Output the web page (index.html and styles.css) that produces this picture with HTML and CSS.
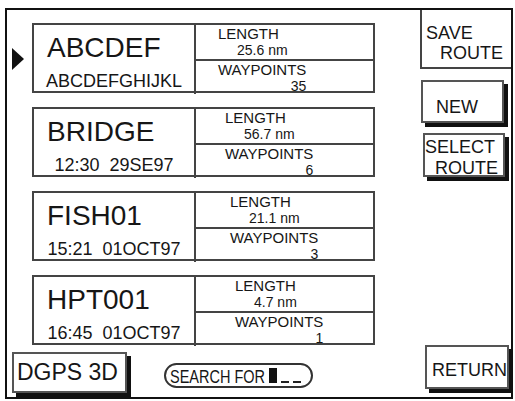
FILE: index.html
```html
<!DOCTYPE html>
<html lang="en">
<head>
  <meta charset="UTF-8">
  <title>Route List</title>
  <link rel="stylesheet" href="styles.css">
</head>
<body>
  <div class="screen">
    <div class="main">
      <div class="routes">
        <div class="route selected">
          <span class="marker"></span>
          <div class="card">
            <div class="title">
              <div class="name">ABCDEF</div>
              <div class="sub">ABCDEFGHIJKL</div>
            </div>
            <div class="stats">
              <div class="half length">
                <div class="label">LENGTH</div>
                <div class="value">25.6 nm</div>
              </div>
              <div class="half points">
                <div class="count"><span class="label">WAYPOINTS</span><span class="value">35</span></div>
              </div>
            </div>
          </div>
        </div>

        <div class="route">
          <span class="marker"></span>
          <div class="card">
            <div class="title">
              <div class="name">BRIDGE</div>
              <div class="sub">12:30  29SE97</div>
            </div>
            <div class="stats">
              <div class="half length">
                <div class="label">LENGTH</div>
                <div class="value">56.7 nm</div>
              </div>
              <div class="half points">
                <div class="count"><span class="label">WAYPOINTS</span><span class="value">6</span></div>
              </div>
            </div>
          </div>
        </div>

        <div class="route">
          <span class="marker"></span>
          <div class="card">
            <div class="title">
              <div class="name">FISH01</div>
              <div class="sub">15:21  01OCT97</div>
            </div>
            <div class="stats">
              <div class="half length">
                <div class="label">LENGTH</div>
                <div class="value">21.1 nm</div>
              </div>
              <div class="half points">
                <div class="count"><span class="label">WAYPOINTS</span><span class="value">3</span></div>
              </div>
            </div>
          </div>
        </div>

        <div class="route">
          <span class="marker"></span>
          <div class="card">
            <div class="title">
              <div class="name">HPT001</div>
              <div class="sub">16:45  01OCT97</div>
            </div>
            <div class="stats">
              <div class="half length">
                <div class="label">LENGTH</div>
                <div class="value">4.7 nm</div>
              </div>
              <div class="half points">
                <div class="count"><span class="label">WAYPOINTS</span><span class="value">1</span></div>
              </div>
            </div>
          </div>
        </div>
      </div>

      <div class="footer">
        <div class="status">DGPS 3D</div>
        <div class="search">
          <span class="search-label">SEARCH FOR</span>
          <span class="cursor"></span>
          <span class="blank"></span>
          <span class="blank"></span>
        </div>
      </div>
    </div>

    <div class="side">
      <div class="save">
        <div>SAVE</div>
        <div class="right">ROUTE</div>
      </div>
      <div class="key key-new">NEW</div>
      <div class="key key-select">
        <div>SELECT</div>
        <div class="right">ROUTE</div>
      </div>
      <div class="key key-return">RETURN</div>
    </div>
  </div>
</body>
</html>
```

FILE: styles.css
```css
* { box-sizing: border-box; }
body { margin: 0; background: #fff; font-family: "Liberation Sans", Arial, sans-serif; color: #161616; }

.screen { display: grid; grid-template-columns: 1fr 91px; width: 508px; height: 391px; margin: 8px 0 0 5px; border: 2px solid #111; }

/* left side: route list */
.main { display: flex; flex-direction: column; padding: 13px 0 0 5px; }
.routes { display: flex; flex-direction: column; gap: 14px; }
.route { display: flex; align-items: center; }
.route:nth-child(1) { --indent: 22px; }
.route:nth-child(2) { --indent: 29px; }
.route:nth-child(3) { --indent: 34px; }
.route:nth-child(4) { --indent: 39px; }

.marker { width: 20px; height: 23px; }
.selected .marker::before { content: ""; display: block; width: 0; height: 0; border-left: 12px solid #111; border-top: 11px solid transparent; border-bottom: 11px solid transparent; margin-top: 1px; }

.card { display: grid; grid-template-columns: 160px 1fr; width: 343px; height: 70px; border: 2px solid #444; }
.title { padding-top: 9px; }
.name { font-size: 28px; line-height: 28px; padding-left: 13px; }
.sub { font-size: 18px; line-height: 18px; margin-top: 10px; text-align: center; white-space: pre; }

.stats { display: flex; flex-direction: column; border-left: 2px solid #444; }
.half { padding-left: var(--indent); }
.length { height: 36px; padding-top: 1px; border-bottom: 2px solid #444; }
.points { flex: 1; }
.length .label { font-size: 15px; line-height: 16px; }
.length .value { font-size: 14px; line-height: 16px; padding-left: 19px; }
.count { display: inline-flex; flex-direction: column; align-items: flex-end; }
.count .label { font-size: 15px; line-height: 16px; }
.count .value { font-size: 14px; line-height: 16px; }

/* bottom status bar */
.footer { display: flex; align-items: flex-start; margin-top: 7px; }
.status { width: 115px; height: 41px; border: 2px solid #555; box-shadow: 4px 4px 0 #111; font-size: 23px; line-height: 37px; padding-left: 3px; }
.search { display: flex; align-items: center; width: 149px; height: 25px; margin: 11px 0 0 37px; padding-left: 4px; border: 2px solid #333; border-radius: 13px; }
.search-label { display: inline-block; font-size: 14.5px; transform: scaleY(1.3); }
.cursor { width: 8px; height: 15px; margin-left: 4px; background: #111; }
.blank { width: 8px; height: 15px; margin-left: 4px; border-bottom: 2px solid #222; }

/* right side: soft keys */
.side { display: flex; flex-direction: column; font-size: 18px; line-height: 20px; }
.save { height: 59px; padding: 13px 8px 0 4px; border-left: 2px solid #444; border-bottom: 2px solid #444; }
.right { text-align: right; }
.key { border: 2px solid #555; box-shadow: 4px 4px 0 #111; background: #fff; }
.key-new { width: 83px; height: 43px; margin: 11px 0 0 1px; padding: 15px 0 0 13px; }
.key-select { width: 82px; height: 44px; margin: 10px 0 0 3px; padding: 2px 5px 0 0; line-height: 21px; }
.key-return { width: 84px; height: 44px; margin: auto 0 8px 5px; padding: 13px 0 0 5px; white-space: nowrap; }
```
